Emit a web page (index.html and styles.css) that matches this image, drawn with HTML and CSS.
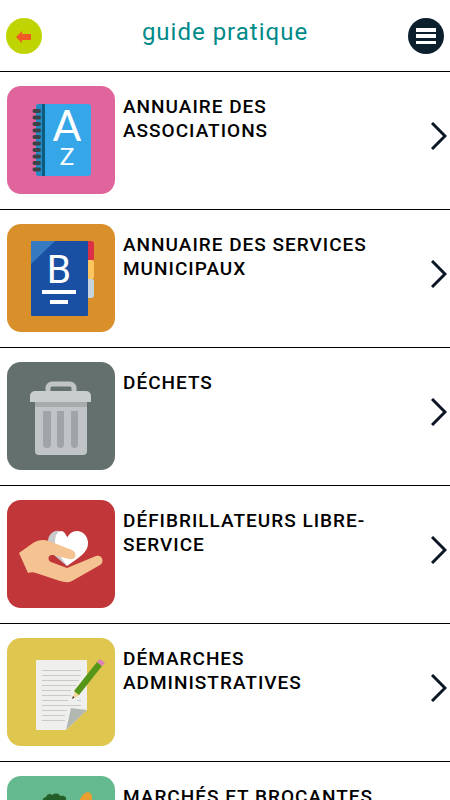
FILE: index.html
```html
<!DOCTYPE html>
<html lang="fr">
<head>
    <meta charset="UTF-8">
    <meta name="viewport" content="width=device-width, initial-scale=1.0">
    <title>Guide pratique</title>
    <link rel="stylesheet" href="styles.css">
</head>
<body>
    <header class="header">
        <button class="round-button back" type="button" aria-label="Retour">
            <svg viewBox="0 0 36 36"><path d="M10 19l6-6v3h9v6h-9v3z" fill="#f15a24"/></svg>
        </button>
        <h1>guide pratique</h1>
        <button class="round-button menu" type="button" aria-label="Menu">
            <svg viewBox="0 0 36 36"><path d="M8 10h20v4H8zM8 16h20v4H8zM8 23h20v3H8z" fill="#fff"/></svg>
        </button>
    </header>

    <main class="list">
        <a class="item" href="#associations">
            <svg class="icon pink" viewBox="0 0 108 108">
                <rect x="29" y="18" width="55" height="72" rx="3" fill="#35a7e8"/>
                <path d="M32 18h3v72h-3a3 3 0 0 1-3-3V21a3 3 0 0 1 3-3z" fill="#2589c4"/>
                <path d="M35 18h3v72h-3z" fill="#0d5c7d"/>
                <path d="M27.500 25h4.500M27.500 31.500h4.500M27.500 38h4.500M27.500 44.500h4.500M27.500 51h4.500M27.500 57.500h4.500M27.500 64h4.500M27.500 70.500h4.500M27.500 77h4.500M27.500 83.500h4.500" stroke="#3b4346" stroke-width="4" stroke-linecap="round"/>
                <text class="letter light" x="60" y="55" font-size="42">A</text>
                <text class="letter light" x="60" y="79" font-size="24">Z</text>
            </svg>
            <span class="label">ANNUAIRE DES ASSOCIATIONS</span>
            <svg class="chevron" viewBox="0 0 16 28"><path d="M1 1l13 13L1 27"/></svg>
        </a>
        <a class="item" href="#services">
            <svg class="icon orange" viewBox="0 0 108 108">
                <path d="M80 17h4a3 3 0 0 1 3 3v16h-7z" fill="#dc3049"/>
                <path d="M80 36h5a2 2 0 0 1 2 2v15a2 2 0 0 1-2 2h-5z" fill="#fdc660"/>
                <path d="M80 55h5a2 2 0 0 1 2 2v14a3 3 0 0 1-3 3h-4z" fill="#c5d3df"/>
                <rect x="24" y="17" width="57" height="75" rx="1" fill="#1a50a3"/>
                <path d="M24 17h24L24 40z" fill="#387abf"/>
                <text class="letter" x="52" y="59" font-size="39">B</text>
                <path d="M35 66h34v4H35zM43 76h18v4H43z" fill="#fff"/>
            </svg>
            <span class="label">ANNUAIRE DES SERVICES MUNICIPAUX</span>
            <svg class="chevron" viewBox="0 0 16 28"><path d="M1 1l13 13L1 27"/></svg>
        </a>
        <a class="item" href="#dechets">
            <svg class="icon grey" viewBox="0 0 108 108">
                <path d="M41 30v-4a4 4 0 0 1 4-4h18a4 4 0 0 1 4 4v4" fill="none" stroke="#c0c4c6" stroke-width="5"/>
                <path d="M28 38h52v51a4 4 0 0 1-4 4H32a4 4 0 0 1-4-4z" fill="#c0c4c6"/>
                <path d="M28 40h52v5H28z" fill="#a8acae"/>
                <path d="M23 40v-6a5 5 0 0 1 5-5h51a5 5 0 0 1 5 5v6z" fill="#c9cdce"/>
                <path d="M36 49h8v33a4 4 0 0 1-8 0zM50 49h7v33a3.500 4 0 0 1-7 0zM64 49h7v33a3.500 4 0 0 1-7 0z" fill="#9fa5a7"/>
            </svg>
            <span class="label">DÉCHETS</span>
            <svg class="chevron" viewBox="0 0 16 28"><path d="M1 1l13 13L1 27"/></svg>
        </a>
        <a class="item" href="#defibrillateurs">
            <svg class="icon red" viewBox="0 0 108 108">
                <path d="M60 66C48 56 41 51 41 42c0-8 6-12 11-11l10 7z" fill="#c9cacb"/>
                <path d="M60 66C53 55 48 52 48 42c0-8 4-11 6-11 3 0 5 3 6 7 2-4 5-7 10-7 6 0 11 5 11 12 0 9-7 13-21 23z" fill="#fff"/>
                <path d="M12 53l14-10c5-3 10-4 16-2l23 9c6 3 4 11-3 9l-16-4c-5-1-6 5-2 7l16 6 29-12c6-2 9 6 4 9L65 81c-4 2-8 1-12 0L29 73c-3-1-5-1-8 0z" fill="#f5c292"/>
            </svg>
            <span class="label">DÉFIBRILLATEURS LIBRE-SERVICE</span>
            <svg class="chevron" viewBox="0 0 16 28"><path d="M1 1l13 13L1 27"/></svg>
        </a>
        <a class="item" href="#demarches">
            <svg class="icon yellow" viewBox="0 0 108 108">
                <path d="M30 22h49a1 1 0 0 1 1 1v49L59 92H30a1 1 0 0 1-1-1V23a1 1 0 0 1 1-1z" fill="#efefed"/>
                <path d="M35 32.500h39M35 37.500h39M35 42.500h37M35 47.500h34M35 52.500h29M35 57.500h29M35 62.500h26M70 62.500h4M35 67.500h39M35 72.500h25M35 77.500h23M35 82.500h23" stroke="#c9cbca"/>
                <path d="M64 70c5 1 10 1 16 2L59 92z" fill="#b2b8b1"/>
                <path d="M65 61l3-8 5 4z" fill="#f5d79b"/>
                <path d="M65 61l1-3 1.500 1.500z" fill="#333"/>
                <path d="M67 53l23-29 5 4-23 29z" fill="#559517"/>
                <path d="M90 24l3-3 5 4-3 3z" fill="#df7fb8"/>
            </svg>
            <span class="label">DÉMARCHES ADMINISTRATIVES</span>
            <svg class="chevron" viewBox="0 0 16 28"><path d="M1 1l13 13L1 27"/></svg>
        </a>
        <a class="item" href="#marches">
            <svg class="icon green" viewBox="0 0 108 108">
                <path d="M37 30c-3-4-2-8 2-9 1-3 4-4 6-2 3-2 7-2 8 1 4-1 7 1 6 4 3 2 2 5 0 7l-6 10H44z" fill="#245f29"/>
                <path d="M46 38h10v14H46z" fill="#8dba4c"/>
                <path d="M69 36c2-10 6-20 12-20 6 1 5 10 0 20L66 56z" fill="#e99f2e"/>
                <path d="M20 48h68l-7 42H27z" fill="#b9804b"/>
                <path d="M24 60h60M26 72h56" stroke="#8d5b32" stroke-width="3"/>
            </svg>
            <span class="label">MARCHÉS ET BROCANTES</span>
            <svg class="chevron" viewBox="0 0 16 28"><path d="M1 1l13 13L1 27"/></svg>
        </a>
    </main>
</body>
</html>
```
FILE: styles.css
```css
* {
    box-sizing: border-box;
}

body {
    margin: 0;
    background: #fff;
    color: #000;
    font-family: Roboto, sans-serif;
}

.header {
    display: flex;
    justify-content: space-between;
    align-items: flex-start;
    padding: 18px 6px 17px;
}

.header h1 {
    margin: 0;
    color: #008a8a;
    font-size: 24px;
    font-weight: 400;
    line-height: 28px;
    letter-spacing: 1px;
}

.round-button {
    width: 36px;
    height: 36px;
    padding: 0;
    border: 0;
    border-radius: 50%;
    cursor: pointer;
}

.round-button svg {
    display: block;
}

.back {
    background: #bfd400;
}

.menu {
    background: #0b1f2d;
}

.item {
    display: flex;
    align-items: flex-start;
    padding: 14px 3px 15px 7px;
    border-top: 1px solid #000;
    color: #000;
    text-decoration: none;
}

.icon {
    flex: none;
    width: 108px;
    height: 108px;
    border-radius: 14px;
}

.pink { background: #e0659c; }
.orange { background: #d9902b; }
.grey { background: #64706e; }
.red { background: #c13639; }
.yellow { background: #dfc64f; }
.green { background: #64b98f; }

.letter {
    fill: #fff;
    font-family: Roboto, sans-serif;
    text-anchor: middle;
}

.light {
    font-family: Lato, sans-serif;
}

.label {
    flex: 1;
    padding: 9px 16px 0 8px;
    font-size: 19px;
    font-weight: 500;
    line-height: 24px;
    letter-spacing: 1px;
}

.chevron {
    flex: none;
    width: 16px;
    height: 28px;
    margin-top: 36px;
    fill: none;
    stroke: #0b1525;
    stroke-width: 3;
}
```
